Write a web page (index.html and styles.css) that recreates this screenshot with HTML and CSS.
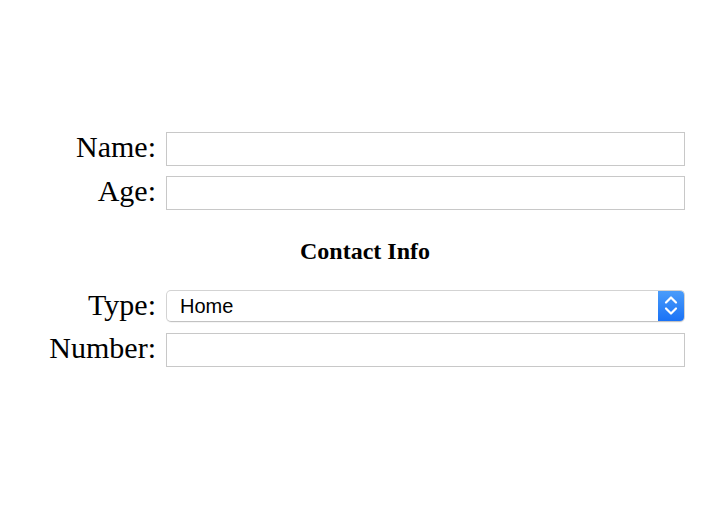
FILE: index.html
```html
<!DOCTYPE html>
<html>
<head>
<meta charset="utf-8">
<link rel="stylesheet" href="styles.css">
</head>
<body>
<form class="form">
  <div class="grid">
    <label class="label" for="name">Name:</label>
    <input class="field" id="name" type="text">
    <label class="label" for="age">Age:</label>
    <input class="field" id="age" type="text">
  </div>
  <h3 class="section-title">Contact Info</h3>
  <div class="grid">
    <label class="label" for="type">Type:</label>
    <div class="select-box">
      <select class="select" id="type">
        <option>Home</option>
        <option>Work</option>
        <option>Mobile</option>
      </select>
      <span class="stepper">
        <svg width="26" height="30" viewBox="0 0 26 30">
          <polyline points="8,11.5 13,6.5 18,11.5" fill="none" stroke="#fff" stroke-width="2.2" stroke-linecap="round" stroke-linejoin="round"/>
          <polyline points="8,17.5 13,22.5 18,17.5" fill="none" stroke="#fff" stroke-width="2.2" stroke-linecap="round" stroke-linejoin="round"/>
        </svg>
      </span>
    </div>
    <label class="label" for="number">Number:</label>
    <input class="field" id="number" type="text">
  </div>
</form>
</body>
</html>
```

FILE: styles.css
```css
html, body {
  margin: 0;
  padding: 0;
  background: #fff;
}

body {
  font-family: "Liberation Serif", "Times New Roman", serif;
  color: #000;
  width: 727px;
}

.form {
  padding-top: 132px;
}

.grid {
  display: grid;
  grid-template-columns: 156px 519px;
  column-gap: 10px;
  row-gap: 10px;
  align-items: start;
}

.label {
  font-size: 30px;
  line-height: 30px;
  text-align: right;
  white-space: nowrap;
}

.field {
  box-sizing: border-box;
  height: 34px;
  width: 519px;
  margin: 0;
  padding: 0 6px;
  border: 1px solid #c8c8c8;
  border-radius: 0;
  background: #fff;
  font-family: "Liberation Sans", Arial, sans-serif;
  font-size: 18px;
  outline: none;
}

.section-title {
  margin: 27px 0 25px;
  padding-left: 3px;
  font-size: 24px;
  line-height: 28px;
  font-weight: bold;
  text-align: center;
}

.select-box {
  box-sizing: border-box;
  display: flex;
  height: 32px;
  width: 519px;
  margin-bottom: 1px;
  border: 1px solid #d3d3d3;
  border-bottom-color: #c2c2c2;
  border-radius: 5px;
  background: #fff;
  overflow: hidden;
  box-shadow: 0 1px 0 rgba(0, 0, 0, 0.04);
}

.select {
  flex: 1;
  min-width: 0;
  appearance: none;
  -webkit-appearance: none;
  border: 0;
  margin: 0;
  padding: 0 0 0 13px;
  background: transparent;
  font-family: "Liberation Sans", Arial, sans-serif;
  font-size: 20px;
  color: #000;
  outline: none;
}

.stepper {
  width: 26px;
  display: flex;
  align-items: center;
  justify-content: center;
  background: linear-gradient(#4a9cfa, #1a72f6);
}

.stepper svg {
  display: block;
}
```
